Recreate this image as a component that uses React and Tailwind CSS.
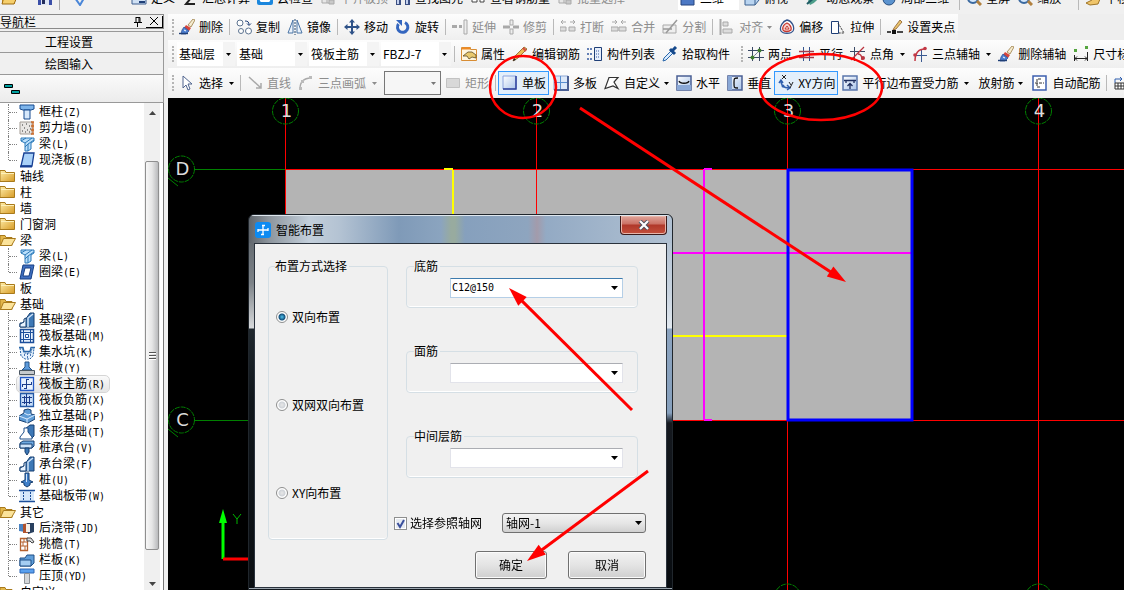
import React, { useState } from 'react';
import clsx from 'clsx';

const NAVY = '#1f3f77';
const BLUE = '#2f5fae';
const GRAY = '#a9a9a9';

// 16x16 drawings shared by the toolbars and the navigation tree
const icons = {
  open: (
    <>
      <path d="M1 3h5l2 2h6v9H1z" fill="#d99a23" />
      <path d="M3 7h13l-3 7H1z" fill="#f6cf6b" stroke="#9c6b12" />
    </>
  ),
  save: (
    <>
      <path d="M1 1h14v14H1z" fill="#3b4fa8" />
      <path d="M4 9h8v6H4z" fill="#dfe6f5" />
      <path d="M5 10h3v4H5z" fill="#222c5c" />
    </>
  ),
  check: <path d="M3 8l5 7 7-12" fill="none" stroke="#4a86d8" strokeWidth="2" />,
  define: (
    <>
      <path d="M1 2h14v12H1z" fill="#cfe0f4" stroke="#3f5f8f" />
      <path d="M8 11h6v2H8z" fill={NAVY} />
    </>
  ),
  sigma: <path d="M13 3H4l5 5-5 6h9" fill="none" stroke="#222" strokeWidth="2" />,
  cloud: (
    <>
      <rect x="0" y="1" width="16" height="14" rx="2" fill="#1b87dd" />
      <path d="M4 12a3 3 0 010-5 4 4 0 018 0 3 3 0 010 5z" fill="#fff" />
    </>
  ),
  grayBoard: (
    <>
      <path d="M2 3h11v10H2zM2 8h11M7 3v10" fill="#e6e6e6" stroke={GRAY} />
      <path d="M9 10h5v4H9z" fill="#c9c9c9" stroke={GRAY} />
    </>
  ),
  find: (
    <>
      <path d="M1 8l2-6h3v13H1zM10 2h3l2 6v7h-5z" fill="#3c4f82" />
      <path d="M6 6h4v4H6z" fill="#6d80b3" />
      <path d="M2 9h2v5H2zM11 9h2v5h-2z" fill="#c5d2ef" />
    </>
  ),
  look: (
    <>
      <path d="M2 7h5v5H2zM10 7h4v5h-4z" fill="#fff" stroke="#444" />
      <path d="M7 8h3" stroke="#444" />
    </>
  ),
  view2d: <path d="M1 3h13v12H1z" fill="#4c78c4" stroke="#27457f" />,
  cube: (
    <>
      <path d="M1 5l4-4h10v9l-4 5H1z" fill="#b9d4f0" stroke="#3a608f" />
      <path d="M1 5h10v10M11 5l4-4" fill="none" stroke="#3a608f" />
    </>
  ),
  orbit: (
    <>
      <path d="M2 11c4-7 9-8 13-8-2 6-6 10-11 12z" fill="#4d9e8a" />
      <path d="M1 14l9-8" stroke="#1e5a63" strokeWidth="2" />
    </>
  ),
  part3d: (
    <>
      <circle cx="8" cy="9" r="6" fill="#5b93cf" stroke="#274d7e" />
      <path d="M8 9V3l5 3z" fill="#fff" />
    </>
  ),
  zoom: (
    <>
      <circle cx="7" cy="8" r="5" fill="#d6e8fb" stroke="#39689f" strokeWidth="2" />
      <path d="M11 11l4 4" stroke="#b2813f" strokeWidth="3" />
    </>
  ),
  pan: <path d="M1 13l6-3 1-7 3 5 4 1-2 5-8 1z" fill="#f0c56a" stroke="#9e7426" />,
  erase: (
    <>
      <path d="M9 6l5-6 2 1-4 7z" fill="#f5ecd0" stroke="#8e6c2c" strokeWidth=".7" />
      <path d="M7 6l5 3-2 3-5-3z" fill="#d6453b" />
      <path d="M5 8l5 4-3 3H2l1-4z" fill="#4d7fd0" stroke="#274b93" strokeWidth=".7" />
      <path d="M0 14.5h9" stroke={NAVY} strokeWidth="1.4" />
      <path d="M5 11l2 1" stroke="#fff" />
    </>
  ),
  copy: (
    <>
      <circle cx="4" cy="4" r="3" fill="#fff" stroke="#5c7390" />
      <circle cx="5" cy="12" r="2.5" fill="#fff" stroke="#5c7390" />
      <circle cx="12.5" cy="12" r="3" fill="#fff" stroke="#5c7390" />
      <path d="M9 2c3 0 4 1 4 4M11 4.500l2 2 2-2" fill="none" stroke={NAVY} />
    </>
  ),
  mirror: (
    <>
      <path d="M6 1v13H1zM10 1v13h5z" fill="#eaf2fb" stroke="#4a74a5" />
      <path d="M8 0v16" stroke="#27486f" strokeDasharray="2 1" />
    </>
  ),
  move: (
    <path
      d="M8 0l3 3.500H9V7h3.500V5L16 8l-3.500 3V9H9v3.500h2L8 16l-3-3.500h2V9H3.500v2L0 8l3.500-3v2H7V3.500H5z"
      fill="#2e5288"
    />
  ),
  rotate: (
    <>
      <path d="M10 3.500A5.200 5.200 0 113.500 5" fill="none" stroke="#3466bf" strokeWidth="3" />
      <path d="M1 1h6v6z" fill="#3466bf" />
    </>
  ),
  extend: (
    <>
      <path d="M0 7.500h5M7 7.500h3" stroke={GRAY} strokeWidth="3" />
      <path d="M12 1h3v14h-3z" fill="#eee" stroke={GRAY} />
    </>
  ),
  trim: (
    <>
      <path d="M7 1h3v5H7zM7 10h3v5H7z" fill="#eee" stroke={GRAY} />
      <path d="M0 8h7M10 8h6" stroke={GRAY} strokeWidth="3" />
    </>
  ),
  breakAt: (
    <>
      <path d="M1 3h5M3 1L1 3l2 2M10 3h5M13 1l2 2-2 2" fill="none" stroke={GRAY} />
      <path d="M0 8h6v4H0zM9 8h6v4H9z" fill="#ddd" stroke={GRAY} />
    </>
  ),
  merge: (
    <>
      <path d="M1 3h5M4 1l2 2-2 2M10 3h5M12 1l-2 2 2 2" fill="none" stroke={GRAY} />
      <path d="M0 8h7v4H0zM8 8h7v4H8z" fill="#ddd" stroke={GRAY} />
    </>
  ),
  split: (
    <>
      <path d="M1 6h13v8H1z" fill="#eee" stroke={GRAY} />
      <path d="M4 14L15 1M1 10h9" stroke="#999" strokeWidth="1.500" />
    </>
  ),
  align: (
    <>
      <path d="M1.500 0v16" stroke={GRAY} strokeWidth="2" />
      <path d="M4 3h5v4H4zM4 10h9v4H4z" fill="#ddd" stroke={GRAY} />
    </>
  ),
  offset: (
    <>
      <path d="M8 1c5 1 8 7 6 11-2 3-10 3-12 0C0 8 4 2 8 1z" fill="#fff" stroke="#34548c" strokeWidth="1.300" />
      <path d="M8 4c3 1 5 5 4 7-2 2-7 2-8 0-1-3 1-6 4-7z" fill="#f6d0cb" stroke="#c6382f" strokeWidth="1.300" />
      <path d="M6 10l2-3 2 3z" fill="#fff" stroke="#c6382f" />
    </>
  ),
  stretch: (
    <>
      <path d="M1.500 2.500h7v12h-7z" fill="#fff" stroke={NAVY} />
      <path d="M8 4l6 10H9" fill="none" stroke="#333" strokeDasharray="2 1" />
    </>
  ),
  grip: (
    <>
      <path d="M7 9l6-8 2 2-6 7-3 1z" fill="#e9c56d" stroke="#8c5a2b" strokeWidth=".8" />
      <path d="M0 13h4M10 13h6" stroke="#111" strokeWidth="1.300" />
      <path d="M5 11h4v4H5z" fill="#111" />
    </>
  ),
  property: (
    <>
      <path d="M.500 1.500h9v2h6v11H.500z" fill="#fff6df" stroke="#d88d34" />
      <path d="M1 2.500h8" stroke="#f08a24" strokeWidth="2" />
      <path d="M2 10l5-4h4l4 3v3l-4-1-3 2-2-3z" fill="#e9c96e" stroke="#5b4a22" strokeWidth=".8" />
    </>
  ),
  pencil: (
    <>
      <path d="M1 15l2-5L12 1l3 2-9 9z" fill="#edbd55" stroke="#8a5a22" strokeWidth=".8" />
      <path d="M1 15l1-3 2 2z" fill="#222" />
      <path d="M11 2l3 3" stroke="#d64f41" strokeWidth="2" />
    </>
  ),
  list: (
    <>
      <path d="M0 3h5M0 8h5M0 13h5" stroke="#3659a0" strokeWidth="1.500" strokeDasharray="2 1" />
      <path d="M7.500 1.500h7v13h-7z" fill="#e6eefb" stroke={NAVY} />
      <path d="M9 5h4M9 8h4M9 11h4" stroke="#3659a0" strokeDasharray="1 1" />
    </>
  ),
  pick: (
    <>
      <path d="M9 5L2 12l-1 3 3-1 7-7z" fill="#d9ebff" stroke="#2a67aa" />
      <path d="M8 3l5 5M10 5l4-4" stroke="#174a8c" strokeWidth="3" />
    </>
  ),
  twoPoint: (
    <>
      <path d="M4.500 1v14M11.500 1v14M0 4.500h16M0 11.500h16" stroke="#3b4a66" />
      <path d="M3 13L13 3" stroke="#3b4a66" strokeDasharray="2 1" />
      <circle cx="4.500" cy="11.500" r="2" fill="#3e7c2f" />
      <circle cx="11.500" cy="4.500" r="2" fill="#3e7c2f" />
    </>
  ),
  parallel: (
    <>
      <path d="M4.500 1v14M10.500 1v14" stroke="#34558f" />
      <path d="M0 5.500h15M0 11.500h15" stroke="#a23b4a" strokeWidth="1.300" />
    </>
  ),
  pointAngle: (
    <>
      <path d="M4.500 1v14M0 5.500h15" stroke="#3b4a66" />
      <path d="M1 14L14 1M8 8c3 0 4 2 4 6" fill="none" stroke="#bb3440" strokeWidth="1.300" />
      <circle cx="13" cy="12" r="2" fill="#bb3440" />
    </>
  ),
  threePoint: (
    <>
      <path d="M9.500 3v13M3 9.500h12" stroke="#3b5a92" />
      <path d="M3 15C3 7 6 3 13 3" fill="none" stroke="#c33945" strokeWidth="1.500" />
      <circle cx="13" cy="2.500" r="1.800" fill="#c33945" />
      <circle cx="3" cy="9" r="1.800" fill="#c33945" />
    </>
  ),
  dimension: (
    <>
      <path d="M1 3h3v3H1zM12 0h3v3h-3z" fill="#55a53f" />
      <path d="M1.500 9v6M14.500 6v9M2 12.500h12M4 10.500l-2 2 2 2M12 10.500l2 2-2 2" fill="none" stroke="#222" />
    </>
  ),
  cursor: <path d="M4 1v12l3-3 2 5 2-1-2-5h4z" fill="#fff" stroke="#50658f" />,
  line: <path d="M2 2l12 11M14 8v5H9" fill="none" stroke={GRAY} strokeWidth="1.500" />,
  arc: (
    <>
      <path d="M2 14C2 7 6 3 13 3" fill="none" stroke={GRAY} strokeWidth="1.300" />
      <path d="M1 12h3v3H1zM3 5h3v3H3zM11 1h3v3h-3z" fill="#bbb" />
    </>
  ),
  rect: <path d="M1.500 3.500h13v9h-13z" fill="#d8d8d8" stroke="#c2c2c2" />,
  single: (
    <>
      <path d="M1 1h13v13H1z" fill="url(#sheen)" stroke="#8aa2dc" />
      <path d="M14 1v13H1" fill="none" stroke="#2c3f9c" strokeWidth="1.500" />
    </>
  ),
  multi: (
    <>
      <path d="M1 1h14v14H1z" fill="#dce8f8" stroke="#8fa9d6" />
      <path d="M15 1v14H1" fill="none" stroke="#4a5f94" strokeWidth="2" />
      <path d="M7.500 1v13M1 7.500h13" stroke="#5a8fd0" />
    </>
  ),
  custom: <path d="M5 2.500h9L10 7l4 6.500L9 11l-8 2.500z" fill="#fff" stroke="#333" strokeWidth="1.200" />,
  horizontal: (
    <>
      <path d="M1 1h14v14H1z" fill="url(#sheen)" stroke="#4a5f94" strokeWidth="1.500" />
      <path d="M1 10h14v5H1z" fill="#8aa8d6" />
      <path d="M3 6c1 3 9 3 10 0" fill="none" stroke="#111" strokeWidth="1.300" />
    </>
  ),
  vertical: (
    <>
      <path d="M1 1h14v14H1z" fill="url(#sheen)" stroke="#4a5f94" strokeWidth="1.500" />
      <path d="M1 1h4v14H1z" fill="#8aa8d6" />
      <path d="M11 3c-4 0-4 0-4 5s0 5 4 5" fill="none" stroke="#111" strokeWidth="1.300" />
    </>
  ),
  xy: (
    <>
      <path d="M3 6c0 4 2 7 8 7M1 8l2-3 2 3M9 10l3 3-3 2" fill="none" stroke={BLUE} strokeWidth="1.500" />
      <path d="M4 0l4 4M8 0L4 4M11 7l2 3M15 7l-3 6" fill="none" stroke="#222" />
      <circle cx="5" cy="11" r="1.500" fill={BLUE} />
    </>
  ),
  edge: (
    <>
      <path d="M1 1h14v14H1z" fill="url(#sheen)" stroke="#5a76ac" strokeWidth="1.500" />
      <path d="M2 5.500h12M4 5v3M12 5v3M8 14V9M5.500 11L8 8.500l2.500 2.500" fill="none" stroke="#1f2f5f" strokeWidth="1.300" />
    </>
  ),
  auto: (
    <>
      <path d="M1 1h13v14H1z" fill="#fff" stroke="#3d5fae" strokeWidth="1.500" />
      <path d="M9 4H5v8h4M3 8h9" fill="none" stroke="#333" strokeDasharray="3 1" />
    </>
  ),
  table: (
    <>
      <path d="M2 8V4h7M7 2l2 2-2 2" fill="none" stroke={BLUE} />
      <path d="M2 8h13v6H2zM5 8v6M8 8v6M11 8v6M2 11h13" fill="#fff" stroke="#333" />
    </>
  ),

  // tree
  folder: (
    <>
      <path d="M0 2.500h5l1 2h8.500v9H0z" fill="url(#gold)" stroke="#a87a1c" />
      <path d="M1 5.500h13" stroke="#fdf0b9" />
    </>
  ),
  folderOpen: (
    <>
      <path d="M0 3.500h5l1 2h6v8H0z" fill="#e2b64a" stroke="#a87a1c" />
      <path d="M3.500 6.500h12l-4 7H.500z" fill="#fbe39a" stroke="#a87a1c" />
    </>
  ),
  column: (
    <>
      <path d="M1 1h14v4l-3 1H4L1 5z" fill="#7db4ea" stroke="#174b8f" />
      <path d="M5 6h6v9H5z" fill="#d6e8fb" stroke="#174b8f" />
    </>
  ),
  wall: (
    <>
      <path d="M1 2h12v12H1z" fill="#e9e6e3" stroke="#a49c95" />
      <path d="M3 5h1M7 4h1M10 6h1M5 8h1M8 10h1M3 11h1M11 9h1M6 12h1M10 12h1" stroke="#333" />
      <path d="M12 2h3M12 6h3M12 10h3M12 14h3M14 2v12" stroke="#c96a2a" strokeWidth="1.300" />
    </>
  ),
  beam: (
    <>
      <path d="M2 2h13v3l-3 2v6l-3 2H6V7L2 5z" fill="#b9defa" stroke="#2a79b9" />
      <path d="M2 5l5-3M6 7l7-5M9 15V8l6-4M6 11l3-3" fill="none" stroke="#2a79b9" />
    </>
  ),
  slab: (
    <>
      <path d="M5 1h10l-2 13H2z" fill="#a9d1f8" stroke="#163f93" strokeWidth="1.300" />
      <path d="M1 14.500h12" stroke="#163f93" strokeWidth="2" />
    </>
  ),
  ring: (
    <>
      <path d="M4 1h11l-3 14H1z" fill="#3f6fc0" stroke="#163f83" />
      <path d="M6 4h6l-2 8H4z" fill="#fff" stroke="#163f83" />
    </>
  ),
  baseBeam: (
    <>
      <path d="M6 8l5-7h4v14H1v-4h3z" fill="#3d78b6" stroke="#173f70" />
      <path d="M1 15v-3l4-2V7l2-1v9z" fill="#eaf4ff" stroke="#173f70" />
      <path d="M9 15V6l5-4" fill="none" stroke="#cfe3f8" strokeWidth="1.500" />
    </>
  ),
  raft: (
    <>
      <path d="M1.500 1.500h13v13h-13z" fill="#e8f2fd" stroke="#1d4f9b" strokeWidth="1.500" />
      <path d="M4.500 1v14M11.500 1v14M1 4.500h14M1 11.500h14" stroke="#1d4f9b" />
      <path d="M6.500 6.500h3v3h-3z" fill="#fff" stroke="#1d4f9b" />
    </>
  ),
  pit: (
    <>
      <path d="M0 3.500h4l1 4h6l1-4h4" fill="none" stroke="#2966a8" strokeWidth="1.300" />
      <path d="M1 4l1 8 4 3h5l3-3 1-8h-2l-1 5H5L3 4z" fill="#e3f0fd" stroke="#2966a8" strokeDasharray="2 1" />
      <path d="M5 11h1M8 10h1M11 11h1M8 13h1" stroke="#1d4f9b" strokeWidth="1.300" />
    </>
  ),
  pier: (
    <>
      <path d="M6 2h4v5l3 3H3l3-3z" fill="#5d9bdb" stroke="#245488" />
      <path d="M.5 10.500h15v4H.5z" fill="#c5c9cd" stroke="#4b5763" />
    </>
  ),
  mainBar: (
    <>
      <path d="M1.500 1.500h13v13h-13z" fill="#e9f3ff" stroke="#2359c6" strokeWidth="1.300" />
      <path d="M7.500 3v10M3 8.500h10M3.500 8v3M12.500 9V6M7 3.500h3M8 12.500H5" fill="none" stroke="#1c3e8c" />
    </>
  ),
  negBar: (
    <>
      <path d="M1.500 1.500h13v13h-13z" fill="#c9dffa" stroke="#2359a6" strokeWidth="1.300" />
      <path d="M7.500 2v12M3 5.500h10M3 10.500h10M5.500 4v8M10.500 4v8" stroke="#1c3e8c" />
    </>
  ),
  footing: (
    <>
      <path d="M0 8l5-3V2l4-1 3 1v4l4 1v4l-7 4-9-3z" fill="#5d9bd5" stroke="#173f70" />
      <path d="M0 8l8 3 8-4M8 11v4M5 5l4 2 3-1" fill="none" stroke="#d9ebff" />
    </>
  ),
  strip: (
    <>
      <path d="M6 5l5-4h4v11l-3 3z" fill="#3d78b6" stroke="#173f70" />
      <path d="M5 4h4v4l4 5v2H1v-2l4-5z" fill="#fff" stroke="#1c4d87" />
    </>
  ),
  cap: (
    <>
      <path d="M1 3l3-2h11v5l-2 2H1z" fill="#6faae2" stroke="#173f70" />
      <path d="M1 4h12v4H1z" fill="#cfe4fa" stroke="#173f70" />
      <path d="M6 8h4v4l-2 3-2-3z" fill="#3d78b6" stroke="#173f70" />
    </>
  ),
  pile: (
    <>
      <path d="M6 1h4v7l4 2-3 1v2l-3 2-3-2v-2l-3-1 4-2z" fill="#3f7fc9" stroke="#173f70" />
      <path d="M7.500 2v8" stroke="#cfe4fa" />
    </>
  ),
  band: (
    <>
      <path d="M1 3h14v10H1z" fill="#d6e8fb" />
      <path d="M0 2.500h16M0 13.500h16" stroke="#1d4f9b" strokeWidth="1.500" />
      <path d="M4.500 4v9M11.500 4v9" stroke="#1d4f9b" strokeDasharray="2 1" />
    </>
  ),
  postCast: (
    <>
      <path d="M0 4h6v8l-6-1z" fill="#4a83c2" />
      <path d="M4 4l7-1v10H4z" fill="#b0532e" />
      <path d="M8 3h7v9l-6 2z" fill="#29405f" />
      <path d="M7 4h4v8H7z" fill="#f5efe9" />
    </>
  ),
  eave: (
    <>
      <path d="M1.500 2.500h7v12h-7z" fill="#fff" stroke="#b4612f" strokeWidth="1.300" />
      <path d="M2 6h7M2 10h7M5 2v4M4 6v4M6 10v4" stroke="#b4612f" />
      <path d="M8 2h4l3 4-2 1-2-2H8z" fill="#d8dadc" stroke="#444" />
    </>
  ),
  fence: (
    <>
      <path d="M1 6h5l2-3h7v8l-3 3H1z" fill="#5f9ed9" stroke="#1f4f86" />
      <path d="M1 8h11v6H1z" fill="#a5cdf2" stroke="#1f4f86" />
    </>
  ),
  coping: (
    <>
      <path d="M1 1h14v4H1z" fill="#5aa0ee" stroke="#2c66b5" />
      <path d="M5.500 5.500h5v10h-5z" fill="#d4d6d8" stroke="#8e9296" />
    </>
  ),
};

function Icon({ name }) {
  return (
    <svg viewBox="0 0 16 16" className="size-4 shrink-0" aria-hidden="true">
      {icons[name]}
    </svg>
  );
}

function Caret({ small, className }) {
  return (
    <svg
      viewBox="0 0 7 4"
      className={clsx('shrink-0', small ? 'h-[3px] w-[5px]' : 'h-1 w-[7px]', className)}
      aria-hidden="true"
    >
      <path d="M0 0h7L3.500 4z" fill="currentColor" />
    </svg>
  );
}

function Separator() {
  return <span className="ml-[3px] mr-0.5 h-4 w-px shrink-0 bg-[#b9b9b9]" />;
}

function Grip() {
  return <span className="mr-px h-4 w-[2px] shrink-0 border-l-2 border-dotted border-[#b5b5b5]" />;
}

// caret: "near" belongs to the button, "split" stands apart from it
function Tool({ icon, label, caret, disabled, active }) {
  return (
    <button
      type="button"
      disabled={disabled}
      className={clsx(
        'flex h-6 shrink-0 items-center gap-1 whitespace-nowrap border pl-[3px] pr-0.5',
        active ? 'border-[#3399ff] bg-[#e3effb]' : 'border-transparent',
        disabled ? 'text-[#8d8d8d]' : 'text-black'
      )}
    >
      {icon && <Icon name={icon} />}
      <span>{label}</span>
      {caret && <Caret small className={caret === 'split' ? 'ml-0.5' : 'ml-0'} />}
    </button>
  );
}

function Combo({ value, label, className }) {
  return (
    <span className={clsx('relative flex h-6 shrink-0 items-center bg-white', className)}>
      <select
        aria-label={label}
        defaultValue={value}
        className="h-full w-full appearance-none border-r-[12px] border-[#f4f4f4] bg-transparent pl-0.5 outline-none"
      >
        <option>{value}</option>
      </select>
      <Caret small className="pointer-events-none absolute right-1" />
    </span>
  );
}

function TopStrip() {
  return (
    <header className="flex h-3.5 shrink-0 items-end overflow-hidden bg-[#f0f0f0] pb-1">
      <div className="flex h-6 w-[127px] shrink-0 items-center gap-5 pl-px">
        <Icon name="open" />
        <Icon name="save" />
        <span className="-ml-3.5 h-full w-px bg-[#aaa]" />
        <span className="-ml-2 flex">
          <Icon name="check" />
        </span>
      </div>
      <Tool icon="define" label="定义" />
      <Tool icon="sigma" label="汇总计算" />
      <Tool icon="cloud" label="云检查" />
      <Tool icon="grayBoard" label="平齐板顶" disabled />
      <Tool icon="find" label="查找图元" />
      <Tool icon="look" label="查看钢筋量" />
      <Tool icon="grayBoard" label="批量选择" disabled />
      <div className="ml-[50px] mr-px flex h-6 w-[61px] shrink-0 items-center gap-1 bg-white pl-0.5">
        <Icon name="view2d" />
        <span>二维</span>
      </div>
      <Tool icon="cube" label="俯视" caret="split" />
      <Tool icon="orbit" label="动态观察" />
      <Tool icon="part3d" label="局部三维" />
      <span className="ml-1 flex">
        <Separator />
      </span>
      <Tool icon="zoom" label="全屏" />
      <Tool icon="zoom" label="缩放" caret="split" />
      <Separator />
      <Tool icon="pan" label="平移" />
    </header>
  );
}

function Toolbars() {
  const row = 'flex items-center overflow-hidden bg-linear-to-b from-[#fdfdfd] to-[#efefef] pl-1';
  return (
    <div className="shrink-0 bg-[#eeeeee]">
      <div className={clsx(row, 'h-[26px] w-[790px]')}>
        <Grip />
        <Tool icon="erase" label="删除" />
        <Separator />
        <Tool icon="copy" label="复制" />
        <Tool icon="mirror" label="镜像" />
        <Separator />
        <Tool icon="move" label="移动" />
        <Tool icon="rotate" label="旋转" />
        <Separator />
        <Tool icon="extend" label="延伸" disabled />
        <Tool icon="trim" label="修剪" disabled />
        <Separator />
        <Tool icon="breakAt" label="打断" disabled />
        <Tool icon="merge" label="合并" disabled />
        <Tool icon="split" label="分割" disabled />
        <Separator />
        <Tool icon="align" label="对齐" caret="near" disabled />
        <Tool icon="offset" label="偏移" />
        <Tool icon="stretch" label="拉伸" />
        <Separator />
        <Tool icon="grip" label="设置夹点" />
      </div>

      <div className={clsx(row, 'h-7')}>
        <Grip />
        <div className="ml-0.5 flex shrink-0 gap-0.5">
          <Combo label="楼层" value="基础层" className="w-[58px]" />
          <Combo label="构件类型" value="基础" className="w-[70px]" />
          <Combo label="构件" value="筏板主筋" className="w-[70px]" />
          <Combo label="构件名称" value="FBZJ-7" className="w-[70px]" />
        </div>
        <Separator />
        <Tool icon="property" label="属性" />
        <Tool icon="pencil" label="编辑钢筋" />
        <Tool icon="list" label="构件列表" />
        <Tool icon="pick" label="拾取构件" />
        <span className="ml-2 flex">
          <Grip />
        </span>
        <Tool icon="twoPoint" label="两点" />
        <Tool icon="parallel" label="平行" />
        <Tool icon="pointAngle" label="点角" caret="split" />
        <Tool icon="threePoint" label="三点辅轴" caret="split" />
        <Tool icon="erase" label="删除辅轴" />
        <Tool icon="dimension" label="尺寸标注" />
      </div>

      <div className={clsx(row, 'h-[30px]')}>
        <Grip />
        <Tool icon="cursor" label="选择" caret="split" />
        <Separator />
        <Tool icon="line" label="直线" disabled />
        <Tool icon="arc" label="三点画弧" caret="split" disabled />
        <span className="relative ml-1 flex h-6 w-[57px] shrink-0 items-center border border-[#777] bg-[#f6f6f6]">
          <select aria-label="画法" className="h-full w-full appearance-none outline-none" />
          <Caret small className="pointer-events-none absolute right-1 text-[#777]" />
        </span>
        <Tool icon="rect" label="矩形" disabled />
        <Separator />
        <Tool icon="single" label="单板" active />
        <Tool icon="multi" label="多板" />
        <Tool icon="custom" label="自定义" caret="near" />
        <Tool icon="horizontal" label="水平" />
        <Tool icon="vertical" label="垂直" />
        <Tool icon="xy" label="XY方向" active />
        <Tool icon="edge" label="平行边布置受力筋" caret="split" />
        <div className="mx-0.5 flex shrink-0">
          <Tool label="放射筋" caret="near" />
        </div>
        <Tool icon="auto" label="自动配筋" />
        <Separator />
        <Tool icon="table" label="查改标注" />
      </div>
    </div>
  );
}

const tree = [
  {
    children: [
      ['column', '框柱', 'Z'],
      ['wall', '剪力墙', 'Q'],
      ['beam', '梁', 'L'],
      ['slab', '现浇板', 'B'],
    ],
  },
  { label: '轴线' },
  { label: '柱' },
  { label: '墙' },
  { label: '门窗洞' },
  {
    label: '梁',
    children: [
      ['beam', '梁', 'L'],
      ['ring', '圈梁', 'E'],
    ],
  },
  { label: '板' },
  {
    label: '基础',
    children: [
      ['baseBeam', '基础梁', 'F'],
      ['raft', '筏板基础', 'M'],
      ['pit', '集水坑', 'K'],
      ['pier', '柱墩', 'Y'],
      ['mainBar', '筏板主筋', 'R'],
      ['negBar', '筏板负筋', 'X'],
      ['footing', '独立基础', 'P'],
      ['strip', '条形基础', 'T'],
      ['cap', '桩承台', 'V'],
      ['baseBeam', '承台梁', 'F'],
      ['pile', '桩', 'U'],
      ['band', '基础板带', 'W'],
    ],
  },
  {
    label: '其它',
    children: [
      ['postCast', '后浇带', 'JD'],
      ['eave', '挑檐', 'T'],
      ['fence', '栏板', 'K'],
      ['coping', '压顶', 'YD'],
    ],
  },
  { label: '自定义', children: [] },
];

function TreeItem({ item, last }) {
  const [icon, label, key] = item;
  const selected = label === '筏板主筋';
  return (
    <li className="flex h-4 items-center pl-2">
      <span
        className={clsx(
          'w-px shrink-0 border-l border-dotted border-[#808080]',
          last ? 'h-2 self-start' : 'h-4'
        )}
      />
      <span className="w-2 shrink-0 border-t border-dotted border-[#808080]" />
      <button
        type="button"
        className={clsx(
          'flex h-4 items-center gap-1 whitespace-nowrap pl-0.5 pr-1',
          selected && 'rounded-sm bg-linear-to-b from-[#fafafa] to-[#e5e5e5] outline outline-[#d5d5d5]'
        )}
      >
        <Icon name={icon} />
        <span>
          {label}
          <span className="font-['DejaVu_Sans_Mono',monospace] text-[10px]">({key})</span>
        </span>
      </button>
    </li>
  );
}

function Sidebar() {
  return (
    <aside className="flex w-[168px] shrink-0 flex-col bg-[#f0f0f0] pr-1">
      <div className="flex h-[15px] shrink-0 items-center border border-l-0 border-[#8a8a8a]">
        <span className="grow">导航栏</span>
        <button type="button" aria-label="固定" className="mr-1 flex">
          <svg viewBox="0 0 8 10" className="h-2.5 w-2">
            <path d="M2 .500h4v5M2 0v6M5 0v6M0 5.500h8M3.500 6v4" fill="none" stroke="#000" />
          </svg>
        </button>
        <button
          type="button"
          aria-label="关闭"
          className="flex h-3 w-[17px] items-center justify-center border-b border-r border-black"
        >
          <svg viewBox="0 0 8 8" className="size-2">
            <path d="M0 0l8 8M8 0L0 8" stroke="#000" />
          </svg>
        </button>
      </div>
      <button
        type="button"
        className="mt-0.5 flex h-[22px] shrink-0 items-center border-b border-r border-t border-[#999] pl-[45px]"
      >
        工程设置
      </button>
      <button
        type="button"
        className="flex h-[22px] shrink-0 items-center border-b border-r border-[#999] pl-[45px]"
      >
        绘图输入
      </button>
      <div className="flex h-7 shrink-0 items-center border-b border-r border-[#999] bg-linear-to-b from-[#fafafa] to-[#ececec] pl-1">
        <button type="button" aria-label="折叠全部" className="flex">
          <svg viewBox="0 0 16 10" className="h-2.5 w-4">
            <path d="M.500.500h8v3h-8zM7.500 6.500h8v3h-8z" fill="#00a0a0" stroke="#000" />
          </svg>
        </button>
      </div>

      <div className="flex min-h-0 grow border-r border-[#777] bg-white">
        <ul className="mt-px min-w-0 grow overflow-hidden">
          {tree.map((group, i) => (
            <li key={i}>
              {group.label && (
                <button type="button" className="flex h-4 items-center gap-1">
                  <Icon name={group.children ? 'folderOpen' : 'folder'} />
                  {group.label}
                </button>
              )}
              {group.children && (
                <ul>
                  {group.children.map((item, n) => (
                    <TreeItem key={n} item={item} last={n === group.children.length - 1} />
                  ))}
                </ul>
              )}
            </li>
          ))}
        </ul>
        <div className="mr-[3px] flex w-4 shrink-0 flex-col items-center bg-[#f0f0f0]">
          <Caret className="mb-[46px] mt-2 rotate-180 text-[#444]" />
          <div className="flex w-[14px] grow items-center justify-center rounded-[2px] border border-[#8f8f8f] bg-linear-to-r from-[#f7f7f7] via-[#e6e6e6] to-[#b9babc]">
            <svg viewBox="0 0 7 8" className="h-2 w-[7px]">
              <path d="M0 .500h7M0 3.500h7M0 6.500h7" stroke="#555" />
              <path d="M0 1.500h7M0 4.500h7M0 7.500h7" stroke="#fff" />
            </svg>
          </div>
          <Caret className="mb-1 mt-8 text-[#444]" />
        </div>
      </div>
    </aside>
  );
}

function AxisMark({ x, y, text }) {
  return (
    <g>
      <circle cx={x} cy={y} r="13" fill="none" stroke="#008000" strokeDasharray="5 1" />
      <text
        x={x + 1}
        y={y + 6}
        textAnchor="middle"
        fill="#dcdcdc"
        fontSize="18"
        fontFamily="DejaVu Sans, sans-serif"
      >
        {text}
      </text>
    </g>
  );
}

// CAD model space, origin at the top left of the canvas
function Drawing() {
  return (
    <svg className="absolute inset-0 size-full" aria-label="筏板平面图">
      <rect x="118" y="71" width="627" height="251" fill="#b4b4b4" />

      <g stroke="#008000" strokeWidth="1">
        <path d="M26 71.500h92M26 322.500h92M0 80l10 8M0 331l10 8" fill="none" />
      </g>
      <g stroke="#f00" strokeWidth="1">
        <path d="M117.500 0v322M368.500 0v492M619.500 0v3000M870.500 0v3000" />
        <path d="M117 71.500h3000M117 322.500h3000" />
      </g>

      <g fill="none" strokeWidth="2">
        <path d="M285 72v200M276 71h9M500 238h119" stroke="#ff0" />
        <path d="M536 71v251M536 71h8M536 322h8M500 155h244" stroke="#f0f" />
      </g>
      <rect x="620" y="72" width="124" height="250" fill="none" stroke="#00f" strokeWidth="3" />

      <AxisMark x={117.5} y={13} text="1" />
      <AxisMark x={368.5} y={13} text="2" />
      <AxisMark x={619.5} y={13} text="3" />
      <AxisMark x={870.5} y={13} text="4" />
      <AxisMark x={13.5} y={71} text="D" />
      <AxisMark x={13.5} y={322} text="C" />
      <AxisMark x={619.5} y={499} text="3" />
      <AxisMark x={870.5} y={499} text="4" />

      {/* coordinate axes */}
      <path d="M55 461v-38" stroke="#0f0" strokeWidth="3" />
      <path d="M55 411l4 14h-8z" fill="#0f0" />
      <path d="M55 461h40" stroke="#f00" strokeWidth="3" />
      <path d="M65 416l4 5 4-5M69 421v5" fill="none" stroke="#00b400" />
    </svg>
  );
}

function RebarField({ label, value, onChange, focused }) {
  return (
    <fieldset className="ml-3 h-[50px] w-[232px] rounded-sm border border-[#d5dfe5] pl-[43px] shadow-[inset_0_-1px_#fff]">
      <legend className="-ml-9 pr-0.5 leading-4">{label}</legend>
      <div
        className={clsx(
          'mt-1 flex h-5 w-[173px] items-center border bg-white pl-px pr-1',
          focused
            ? 'border-[#b5cfe7] border-t-[#3d7bad]'
            : 'border-[#e2e3ea] border-t-[#abadb3]'
        )}
      >
        <input
          type="text"
          aria-label={label}
          value={value}
          autoFocus={focused}
          onFocus={(e) => e.target.setSelectionRange(value.length, value.length)}
          onChange={(e) => onChange(e.target.value)}
          className="w-full min-w-0 grow font-['DejaVu_Sans_Mono',monospace] text-[10px] outline-none"
        />
        <button type="button" aria-label={`${label}列表`} className="flex">
          <Caret />
        </button>
      </div>
    </fieldset>
  );
}

const modes = ['双向布置', '双网双向布置', 'XY向布置'];

function LayoutDialog() {
  const [mode, setMode] = useState('双向布置');
  const [useGrid, setUseGrid] = useState(true);
  const [bars, setBars] = useState({ bottom: 'C12@150', top: '', middle: '' });

  const setBar = (name) => (value) => setBars({ ...bars, [name]: value });

  const buttonClass =
    'h-7 rounded-[3px] border border-[#707070] bg-linear-to-b from-[#f2f2f2] via-[#e4e4e4] to-[#cfcfcf] shadow-[inset_0_0_0_1px_#fbfbfb]';

  return (
    <div
      role="dialog"
      aria-label="智能布置"
      className="absolute left-20 top-[116px] w-[425px] overflow-hidden rounded-t-md border border-[#20262c] bg-[#12181e]"
    >
      <div className="flex h-7 items-center border-t border-[#dfe7ee] bg-[linear-gradient(90deg,#5f656b_0,#8d959d_20px,#c3cfdb_60px,#b4c3d3_90px,#7f9ab8_150px,#8ba4bf_192px,#98ab9f_202px,#98ab9f_206px,#86a0bd_216px,#8ea5bf_279px,#a39bab_288px,#93aac4_297px,#b1c1d2_100%)] pl-1.5">
        <span className="flex size-4 items-center justify-center rounded-[3px] bg-[#0d8bf2]">
          <svg viewBox="0 0 12 12" className="size-3">
            <path
              d="M6 1v10M1 6h10M1 5v3M11 7V4M5 1.500h3M4 10.500h3"
              fill="none"
              stroke="#fff"
              strokeWidth="1.300"
            />
          </svg>
        </span>
        <span className="ml-[5px] grow">智能布置</span>
        <button
          type="button"
          aria-label="关闭"
          className="mr-[5px] flex h-[19px] w-[47px] items-center justify-center self-start rounded-b-[4px] border border-t-0 border-[#3c1a1a] bg-[linear-gradient(#e0a59b_0,#cb7164_8px,#b0382a_9px,#c4503c_100%)] shadow-[inset_0_0_0_1px_#e7b5aa]"
        >
          <svg viewBox="0 0 12 10" className="h-2.5 w-3">
            <path d="M2 1l8 8M10 1L2 9" stroke="#4c4f5c" strokeWidth="4" />
            <path d="M2 1l8 8M10 1L2 9" stroke="#fff" strokeWidth="2.200" />
          </svg>
        </button>
      </div>

      <div className="flex">
        <div className="w-[5px] shrink-0 bg-[linear-gradient(#676d73_0,#7d8388_40px,#d8dadc_85px,#20282e_86px,#10161b_160px,#0b0f13_100%)]" />
        <div className="flex grow gap-1.5 border border-[#2a323c] bg-[#f0f0f0] pb-2 pl-[13px] pr-5 pt-3.5">
          <fieldset className="h-[282px] w-[120px] rounded-sm border border-[#d5dfe5] shadow-[inset_0_-1px_#fff]">
            <legend className="ml-1.5 pr-0.5 leading-4">布置方式选择</legend>
            <div className="flex flex-col gap-[72px] pl-[7px] pt-[35px]">
              {modes.map((name) => (
                <label key={name} className="flex h-4 items-center gap-1 whitespace-nowrap">
                  <input
                    type="radio"
                    name="mode"
                    checked={mode === name}
                    onChange={() => setMode(name)}
                    className="size-3 shrink-0 appearance-none rounded-full border border-[#8e8f8f] bg-[radial-gradient(#e8e8e8_0,#cfd3d8_3px,#fff_4px)] checked:bg-[radial-gradient(#4fc3ee_0,#14507c_3px,#fff_4px)]"
                  />
                  {name}
                </label>
              ))}
            </div>
          </fieldset>

          <div className="flex w-[252px] flex-col">
            <div className="flex flex-col gap-[35px]">
              <RebarField label="底筋" value={bars.bottom} onChange={setBar('bottom')} focused />
              <RebarField label="面筋" value={bars.top} onChange={setBar('top')} />
              <RebarField label="中间层筋" value={bars.middle} onChange={setBar('middle')} />

              <div className="flex h-5 items-center">
                <label className="flex grow items-center gap-[3px]">
                  <input
                    type="checkbox"
                    checked={useGrid}
                    onChange={(e) => setUseGrid(e.target.checked)}
                    className="peer size-[13px] appearance-none border border-[#8e8f8f] bg-[#e6eaf0] shadow-[inset_0_0_0_1px_#fff]"
                  />
                  <svg
                    viewBox="0 0 13 13"
                    className="pointer-events-none invisible -ml-4 size-[13px] peer-checked:visible"
                  >
                    <path d="M3.500 6l2.500 4 4-7" fill="none" stroke="#3a4f9c" strokeWidth="2" />
                  </svg>
                  选择参照轴网
                </label>
                <span className="relative flex h-5 w-36 items-center">
                  <select
                    aria-label="参照轴网"
                    className="size-full appearance-none rounded-[3px] border border-[#707070] bg-linear-to-b from-[#f2f2f2] via-[#e6e6e6] to-[#d0d0d0] pl-[3px] outline-none"
                  >
                    <option>轴网-1</option>
                  </select>
                  <Caret className="pointer-events-none absolute right-1" />
                </span>
              </div>
            </div>

            <div className="mt-[18px] flex justify-end gap-[21px]">
              <button type="button" className={clsx(buttonClass, 'w-[72px]')}>
                确定
              </button>
              <button type="button" className={clsx(buttonClass, 'w-[78px]')}>
                取消
              </button>
            </div>
          </div>
        </div>
        <div className="w-[5px] shrink-0 bg-[linear-gradient(#b4c3d3_0,#c9d4e0_50px,#e2e9f0_85px,#8ba3bf_86px,#86a0bd_170px,#15191f_180px,#080c10_100%)]" />
      </div>
      <div className="h-0.5 border-t border-[#9aa4ad]" />
    </div>
  );
}

function Arrow({ from, to }) {
  const angle = (Math.atan2(to[1] - from[1], to[0] - from[0]) * 180) / Math.PI;
  const length = Math.hypot(to[0] - from[0], to[1] - from[1]);
  return (
    <g transform={`translate(${from[0]} ${from[1]}) rotate(${angle})`}>
      <path d={`M0 0H${length - 15}`} stroke="#f00" strokeWidth="3" />
      <path d={`M${length} 0l-19 -6v12z`} fill="#f00" />
    </g>
  );
}

function Annotations() {
  return (
    <svg className="pointer-events-none absolute inset-0 size-full" aria-hidden="true">
      <g fill="none" stroke="#f00" strokeWidth="2.500">
        <ellipse cx="523" cy="87" rx="33" ry="31" />
        <ellipse cx="821" cy="87" rx="61" ry="33" />
      </g>
      <Arrow from={[580, 108]} to={[846, 282]} />
      <Arrow from={[632, 410]} to={[509, 288]} />
      <Arrow from={[648, 471]} to={[527, 561]} />
    </svg>
  );
}

export default function App() {
  return (
    <div className="relative flex h-screen flex-col overflow-hidden bg-[#f0f0f0] font-['Noto_Sans_CJK_SC',sans-serif] text-[12px] leading-4 text-black">
      {/* gradients used by the icons */}
      <svg className="absolute size-0" aria-hidden="true">
        <linearGradient id="sheen" x1="0" y1="0" x2="1" y2="1">
          <stop offset="0" stopColor="#fff" />
          <stop offset="1" stopColor="#a9c4ea" />
        </linearGradient>
        <linearGradient id="gold" x1="0" y1="0" x2="1" y2="1">
          <stop offset="0" stopColor="#ffeeaa" />
          <stop offset="1" stopColor="#d79b25" />
        </linearGradient>
      </svg>

      <TopStrip />
      <div className="flex min-h-0 grow">
        <Sidebar />
        <main className="flex min-w-0 grow flex-col">
          <Toolbars />
          <div className="relative min-h-0 grow overflow-hidden bg-black">
            <Drawing />
            <LayoutDialog />
          </div>
        </main>
      </div>
      <Annotations />
    </div>
  );
}
